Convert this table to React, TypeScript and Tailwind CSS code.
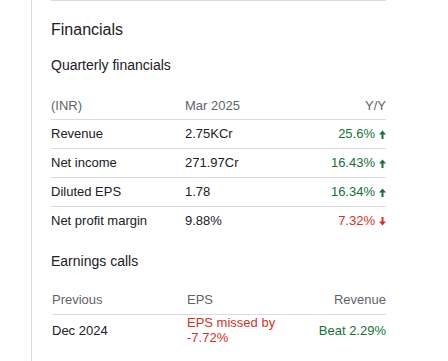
import React from 'react'

const rows = [
  { label: 'Revenue', value: '2.75KCr', change: '25.6%', up: true },
  { label: 'Net income', value: '271.97Cr', change: '16.43%', up: true },
  { label: 'Diluted EPS', value: '1.78', change: '16.34%', up: true },
  { label: 'Net profit margin', value: '9.88%', change: '7.32%', up: false },
]

const Arrow = ({ up }: { up: boolean }) => (
  <svg width="7" height="9" viewBox="0 0 7 9" className={up ? 'fill-[#137333]' : 'fill-[#d93025]'}>
    {up ? (
      <>
        <polygon points="0,4.5 3.5,0.5 7,4.5" />
        <rect x="2.5" y="4" width="2" height="5" />
      </>
    ) : (
      <>
        <polygon points="0,4.5 3.5,8.5 7,4.5" />
        <rect x="2.5" y="0" width="2" height="5" />
      </>
    )}
  </svg>
)

const App = () => {
  return (
    <div className="w-[448px] h-[361px] bg-white flex font-['Liberation_Sans',Arial,sans-serif] overflow-hidden">
      <div className="w-[32px] shrink-0 border-r border-[#dadce0]" />
      <div className="ml-[19px] w-[335px] border-t border-[#dadce0] pt-[17px]">
        <h2 className="text-[16px] leading-6 text-[#202124]">Financials</h2>
        <h3 className="mt-[13px] text-[14px] leading-5 text-[#202124]">Quarterly financials</h3>

        <div className="mt-[23px] text-[13px] leading-4">
          <div className="grid grid-cols-[134px_1fr_auto] pb-[5px] border-b border-[#dadce0] text-[#5f6368]">
            <span>(INR)</span>
            <span>Mar 2025</span>
            <span className="text-right">Y/Y</span>
          </div>
          {rows.map((r, i) => (
            <div
              key={r.label}
              className={`grid grid-cols-[134px_1fr_auto] py-[6px] text-[#202124] ${i < rows.length - 1 ? 'border-b border-[#dadce0]' : ''}`}
            >
              <span>{r.label}</span>
              <span>{r.value}</span>
              <span className={`flex items-center gap-[4px] ${r.up ? 'text-[#137333]' : 'text-[#d93025]'}`}>
                {r.change}
                <Arrow up={r.up} />
              </span>
            </div>
          ))}
        </div>

        <h3 className="mt-[16px] text-[14px] leading-5 text-[#202124]">Earnings calls</h3>

        <div className="mt-[21px] text-[13px] pl-px">
          <div className="grid grid-cols-[135px_110px_1fr] leading-4 pb-[6px] border-b border-[#dadce0] text-[#5f6368]">
            <span>Previous</span>
            <span>EPS</span>
            <span className="text-right">Revenue</span>
          </div>
          <div className="grid grid-cols-[135px_110px_1fr] items-center leading-[15px]">
            <span className="text-[#202124]">Dec 2024</span>
            <span className="text-[#d93025]">EPS missed by -7.72%</span>
            <span className="text-right text-[#137333]">Beat 2.29%</span>
          </div>
        </div>
      </div>
    </div>
  )
}

export default App
